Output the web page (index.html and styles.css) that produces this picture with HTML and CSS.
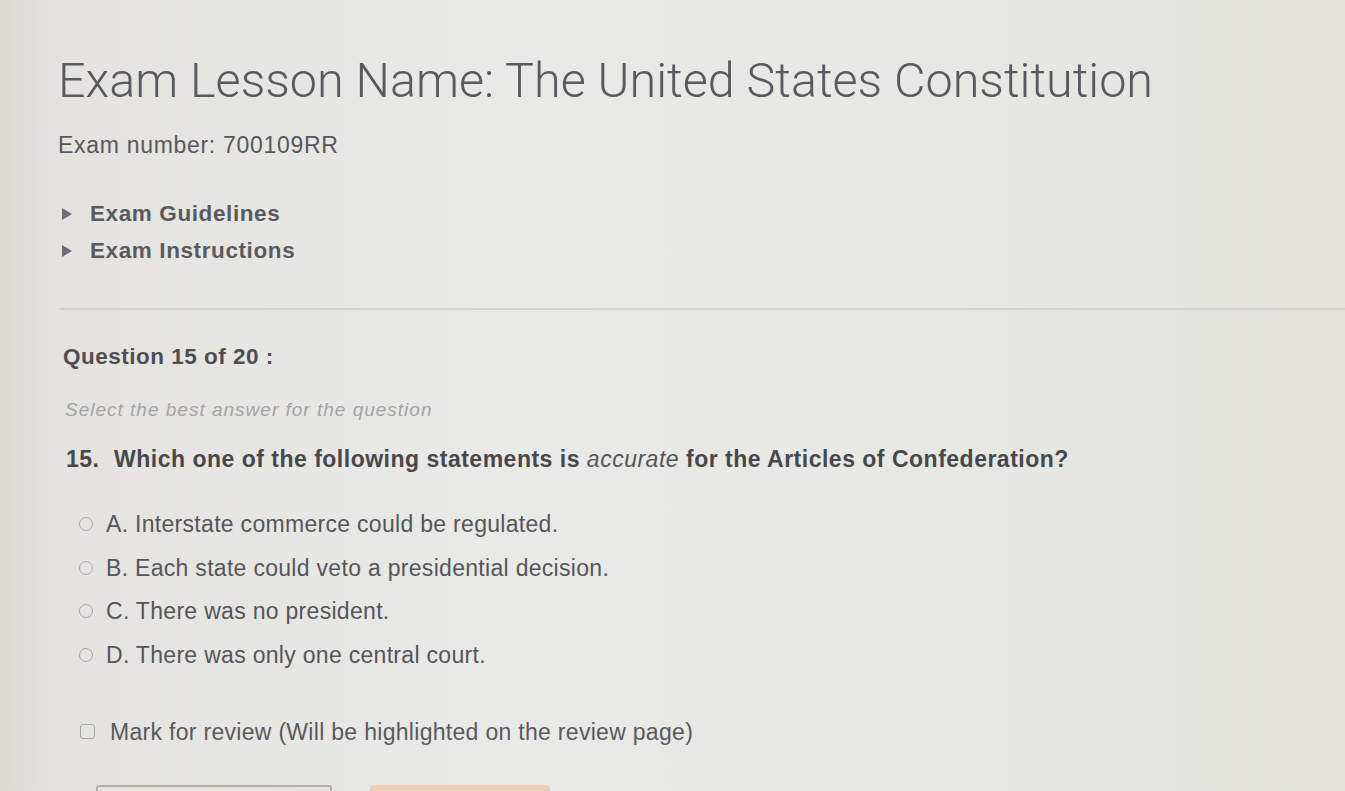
FILE: index.html
```html
<!DOCTYPE html>
<html>
<head>
<meta charset="utf-8">
<link rel="stylesheet" href="styles.css">
</head>
<body>
<div class="page">
  <header class="head">
    <h1 class="title">Exam Lesson Name: The United States Constitution</h1>
    <div class="exam-number">Exam number: 700109RR</div>
    <ul class="toggles">
      <li class="toggle"><span class="tri"></span>Exam Guidelines</li>
      <li class="toggle"><span class="tri"></span>Exam Instructions</li>
    </ul>
  </header>
  <hr class="divider">
  <section class="question">
    <div class="q-count">Question 15 of 20 :</div>
    <div class="q-hint">Select the best answer for the question</div>
    <div class="q-text"><span class="q-num">15.</span>Which one of the following statements is <em>accurate</em> for the Articles of Confederation?</div>
    <ul class="options">
      <li class="option"><span class="radio"></span>A. Interstate commerce could be regulated.</li>
      <li class="option"><span class="radio"></span>B. Each state could veto a presidential decision.</li>
      <li class="option"><span class="radio"></span>C. There was no president.</li>
      <li class="option"><span class="radio"></span>D. There was only one central court.</li>
    </ul>
    <div class="review"><span class="check"></span>Mark for review (Will be highlighted on the review page)</div>
    <div class="buttons">
      <span class="btn btn-plain"></span>
      <span class="btn btn-orange"></span>
    </div>
  </section>
</div>
</body>
</html>
```
FILE: styles.css
```css
html, body {
  margin: 0;
  padding: 0;
  height: 100%;
  overflow: hidden;
}
body {
  background: linear-gradient(90deg, #dcd9d4 0px, #e4e3e0 60px, #e9e9e7 500px, #e7e7e4 1000px, #e2e1dc 1345px);
  font-family: "Liberation Sans", Arial, sans-serif;
  color: #4a4a4e;
}
.page {
  padding: 0 0 0 58px;
}
.title {
  margin: 0;
  padding-top: 52px;
  font-family: Roboto, "Liberation Sans", sans-serif;
  font-weight: 300;
  font-size: 48.5px;
  line-height: 58px;
  color: #59595f;
}
.exam-number {
  margin-top: 22px;
  font-size: 23px;
  line-height: 26px;
  color: #58585c;
  letter-spacing: 0.7px;
}
.toggles {
  list-style: none;
  margin: 43px 0 0 0;
  padding: 0;
  display: flex;
  flex-direction: column;
  gap: 11px;
}
.toggle {
  display: flex;
  align-items: center;
  font-weight: bold;
  font-size: 22.5px;
  line-height: 26px;
  color: #5a5a5e;
  letter-spacing: 0.6px;
}
.tri {
  width: 0;
  height: 0;
  border-top: 6px solid transparent;
  border-bottom: 6px solid transparent;
  border-left: 10px solid #6c6c7a;
  margin: 0 18px 0 4px;
}
.divider {
  border: none;
  border-top: 2px solid #d2d2d0;
  margin: 44px 0 0 2px;
}
.question {
  padding-left: 5px;
}
.q-count {
  margin-top: 34px;
  font-weight: bold;
  font-size: 22.5px;
  line-height: 26px;
  color: #4e4e52;
  letter-spacing: 0.5px;
}
.q-hint {
  margin-top: 30px;
  font-style: italic;
  font-size: 19px;
  line-height: 20px;
  color: #a3a3a6;
  padding-left: 2px;
  letter-spacing: 1px;
}
.q-text {
  margin-top: 26px;
  font-weight: bold;
  font-size: 23px;
  line-height: 26px;
  color: #48484c;
  padding-left: 3px;
  letter-spacing: 0.5px;
}
.q-text em {
  font-weight: normal;
  font-style: italic;
  color: #55555a;
}
.q-num {
  display: inline-block;
  width: 48px;
}
.options {
  list-style: none;
  margin: 39px 0 0 0;
  padding: 0 0 0 16px;
  display: flex;
  flex-direction: column;
  gap: 17.5px;
}
.option {
  display: flex;
  align-items: center;
  font-size: 23px;
  line-height: 26px;
  color: #56565a;
  letter-spacing: 0.3px;
}
.radio {
  width: 12px;
  height: 12px;
  border: 1.5px solid #a6a6a8;
  border-radius: 50%;
  margin-right: 13px;
  flex: none;
}
.review {
  display: flex;
  align-items: center;
  margin-top: 51px;
  padding-left: 17px;
  font-size: 23px;
  line-height: 26px;
  color: #5a5a5e;
  letter-spacing: 0.3px;
}
.check {
  width: 13px;
  height: 13px;
  border: 1.5px solid #a6a6a8;
  border-radius: 3px;
  margin-right: 15px;
  flex: none;
}
.buttons {
  display: flex;
  gap: 38px;
  margin-top: 40px;
  padding-left: 33px;
}
.btn {
  display: block;
  height: 30px;
  border-radius: 3px;
}
.btn-plain {
  width: 232px;
  border: 2px solid #b0aea8;
  background: #e6e4e0;
}
.btn-orange {
  width: 180px;
  background: #eecfb8;
}
```
